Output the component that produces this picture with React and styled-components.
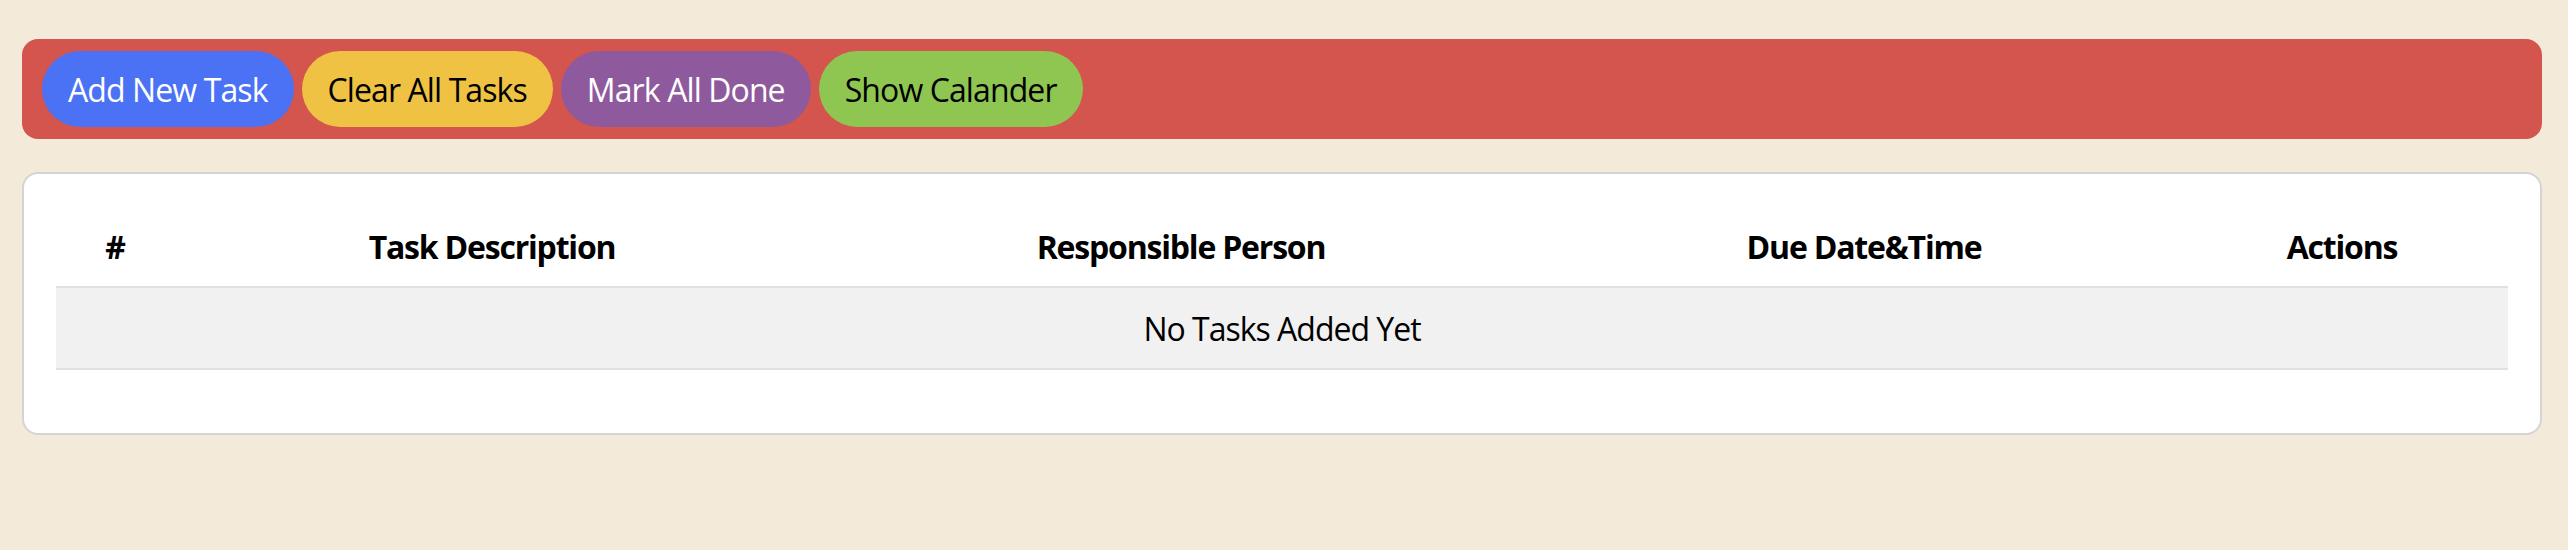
import React from "react";
import styled, { createGlobalStyle } from "styled-components";

const GlobalStyle = createGlobalStyle`
  html, body {
    margin: 0;
    padding: 0;
    background: #f3ead9;
    font-family: "Open Sans", "Noto Sans", sans-serif;
  }
`;

const Page = styled.div`
  padding: 39px 26px 40px 22px;
  display: flex;
  flex-direction: column;
  gap: 33px;
`;

const Toolbar = styled.div`
  display: flex;
  align-items: center;
  gap: 8px;
  height: 100px;
  box-sizing: border-box;
  padding: 12px 20px;
  background: #d4544e;
  border-radius: 16px;
`;

const Button = styled.button`
  height: 76px;
  padding: 0 26px;
  border: none;
  border-radius: 38px;
  background: ${(p) => p.$bg};
  color: ${(p) => (p.$light ? "#ffffff" : "#000000")};
  font-family: inherit;
  font-size: 32px;
  letter-spacing: -0.9px;
  white-space: nowrap;
  cursor: pointer;
`;

const Card = styled.div`
  background: #ffffff;
  border: 2px solid #d4d4d4;
  border-radius: 16px;
  padding: 32px 32px 63px;
`;

const Table = styled.table`
  width: 100%;
  border-collapse: collapse;
  table-layout: fixed;
`;

const Th = styled.th`
  height: 80px;
  padding: 0;
  font-size: 32px;
  font-weight: 700;
  color: #000;
  letter-spacing: -1.2px;
  text-align: center;
`;

const EmptyRow = styled.tr`
  background: #f1f1f1;
  border-top: 2px solid #dee1e5;
  border-bottom: 2px solid #dee1e5;
`;

const EmptyCell = styled.td`
  height: 80px;
  padding: 0;
  text-align: center;
  font-size: 32px;
  color: #000;
  letter-spacing: -1px;
`;

const columns = [
  { label: "#", width: 118 },
  { label: "Task Description", width: 636 },
  { label: "Responsible Person", width: 742 },
  { label: "Due Date&Time", width: 624 },
  { label: "Actions", width: 332 },
];

const buttons = [
  { label: "Add New Task", bg: "#4b72f5", light: true },
  { label: "Clear All Tasks", bg: "#efc244" },
  { label: "Mark All Done", bg: "#8f5a9d", light: true },
  { label: "Show Calander", bg: "#8fc651" },
];

export default function App() {
  return (
    <>
      <GlobalStyle />
      <Page>
        <Toolbar>
          {buttons.map((b) => (
            <Button key={b.label} $bg={b.bg} $light={b.light}>
              {b.label}
            </Button>
          ))}
        </Toolbar>
        <Card>
          <Table>
            <colgroup>
              {columns.map((c) => (
                <col key={c.label} style={{ width: c.width }} />
              ))}
            </colgroup>
            <thead>
              <tr>
                {columns.map((c) => (
                  <Th key={c.label}>{c.label}</Th>
                ))}
              </tr>
            </thead>
            <tbody>
              <EmptyRow>
                <EmptyCell colSpan={5}>No Tasks Added Yet</EmptyCell>
              </EmptyRow>
            </tbody>
          </Table>
        </Card>
      </Page>
    </>
  );
}
